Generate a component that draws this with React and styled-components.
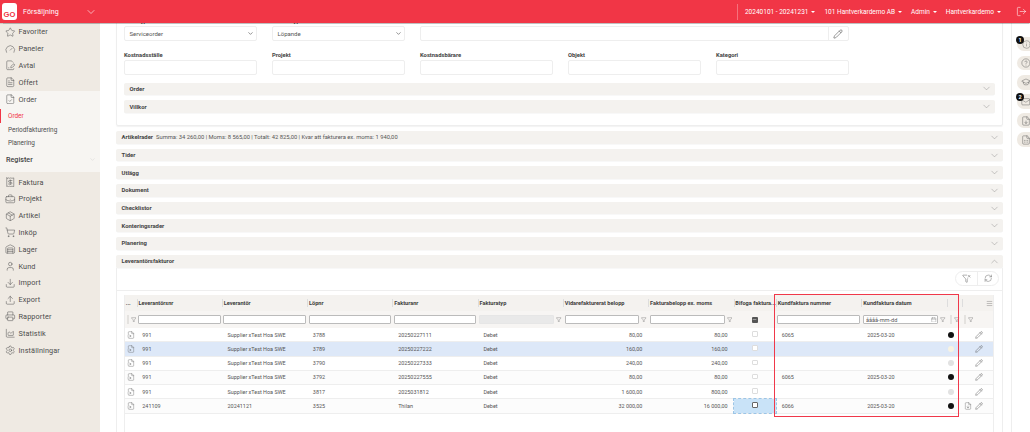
import React from "react";
import styled, { createGlobalStyle } from "styled-components";
import {
  Star, Gauge, FileSignature, FileText, FileCheck, Receipt, BriefcaseBusiness, Package, ShoppingCart,
  Warehouse, User, Download, Upload, Printer, AreaChart, Settings, ChevronDown, LogOut, Pencil, Info,
  HelpCircle, GraduationCap, Mail, FileDown, FileSpreadsheet, FilterX, RefreshCw, Filter, Calendar, Menu, FileInput, Minus
} from "lucide-react";

const Global = createGlobalStyle`
  html, body { margin: 0; padding: 0; background: #fff; }
  body { font-family: Roboto, "Liberation Sans", sans-serif; color: #555; overflow: hidden; }
  * { box-sizing: border-box; }
`;

const Page = styled.div`width: 1030px; height: 432px; overflow: hidden; display: flex; flex-direction: column;`;

const Topbar = styled.header`
  height: 23px; flex: none; background: #f13646; color: #fff; display: flex; align-items: center;
  position: relative; z-index: 2; box-shadow: 0 0.5px 1px rgba(0,0,0,.25);
`;
const Logo = styled.div`
  width: 15px; height: 17px; margin-left: 2px; background: #fff; border-radius: 3px; color: #f13646;
  font: 700 7.6px "Liberation Sans", sans-serif; display: flex; align-items: flex-end; justify-content: center; padding-bottom: 1px;
`;
const ModuleName = styled.span`font-size: 7.1px; margin-left: 6px; width: 61.5px; letter-spacing: .1px;`;
const TopSpacer = styled.div`flex: 1;`;
const TopDivider = styled.div`width: 1px; height: 16px; background: rgba(255,255,255,.3); margin-right: 7px;`;
const TopMenu = styled.div`display: flex; align-items: center; font-size: 6.5px; margin-right: ${p => p.$gap}px;`;
const Caret = styled.i`
  display: inline-block; margin-left: 3px; border-left: 2.2px solid transparent; border-right: 2.2px solid transparent; border-top: 2.2px solid #fff;
`;
const ExitWrap = styled.div`margin-right: 3px; display: flex;`;

const Body = styled.div`flex: 1; min-height: 0; display: flex;`;

const Sidebar = styled.nav`width: 100px; flex: none; background: #efeae3; display: flex; flex-direction: column; padding-top: .6px;`;
const NavItem = styled.div`
  height: 16.8px; display: flex; align-items: center; padding-left: 5px; gap: 3px; font-size: 7.3px; color: #4d4d4d; letter-spacing: .1px;
  svg { flex: none; color: #555; }
`;
const ActiveBlock = styled.div`background: #f7f5f2; height: 81.5px; margin-bottom: 1.5px; display: flex; flex-direction: column;`;
const SubItem = styled.div`
  height: 13.7px; display: flex; align-items: center; font-size: 6.4px;
  color: ${p => (p.$active ? "#f13646" : "#4d4d4d")};
  border-left: ${p => (p.$active ? "1px solid #f13646" : "none")};
  margin-top: ${p => (p.$active ? "1.5px" : "0")};
  padding-left: ${p => (p.$active ? "7px" : "8px")};
`;
const RegisterHead = styled.div`
  height: 19px; display: flex; align-items: center; justify-content: space-between; padding: 0 4px 0 6px; font-size: 7.2px; font-weight: 500; color: #444;
  svg { color: #bbb; }
`;

const Main = styled.main`flex: 1; min-width: 0; overflow: hidden; padding: 0 8px 0 16px; border-right: 1px solid #eee;`;
const Scrolled = styled.div`margin-top: -12px; display: flex; flex-direction: column;`;

const Card = styled.section`
  border: 1px solid #eee; border-radius: 2px; height: 114.5px; padding: 0 7px; margin-bottom: 5.5px; box-shadow: 0 .5px 1px rgba(0,0,0,.05);
`;
const FormGrid = styled.div`
  display: grid; grid-template-columns: repeat(5, 133px); column-gap: 15px; margin-bottom: 7.5px;
`;
const FieldBox = styled.div`
  grid-column: span ${p => p.$span || 1};
`;
const Label = styled.div`height: 11px; margin-top: ${p => p.$top || 0}px; font-size: 5.8px; font-weight: 700; color: #444; display: flex; align-items: center;`;
const Input = styled.div`
  height: 15px; border: 1px solid #eee; border-radius: 2px; background: #fff; display: flex; align-items: center; justify-content: space-between;
  padding: 0 2px 0 4.5px; font-size: 6px; color: #555;
`;
const PencilCell = styled.div`
  height: 100%; width: 20.5px; margin-right: -2px; border-left: 1px solid #eee; display: flex; align-items: center; justify-content: center; color: #444;
`;

const Accordion = styled.div`
  height: ${p => p.$h || 12.7}px; flex: none; background: #f4f2ef; border-radius: 2px; display: flex; align-items: center; justify-content: space-between;
  padding: 0 3.5px 0 5.5px; margin-bottom: ${p => (p.$mb === undefined ? 5 : p.$mb)}px; font-size: 5.9px; color: #555;
  box-shadow: 0 .5px 0 rgba(0,0,0,.06);
  svg { color: #888; }
  b { font-weight: 700; color: #444; }
`;
const AccordionText = styled.span`font-size: 5.8px; margin-left: 3px; color: #555;`;
const AccordionLabel = styled.div`display: flex; align-items: center;`;

const OpenPanel = styled.section`display: flex; flex-direction: column;`;
const PanelBody = styled.div`border: 1px solid #eee; border-top: none; margin-top: -5px; padding-top: 0; height: 180px;`;
const Toolbar = styled.div`height: 23.5px; border-bottom: 1px solid #eee; display: flex; align-items: center; justify-content: flex-end; padding: 0 3px 1px 0;`;
const PillGroup = styled.div`width: 44px; height: 15px; border: 1px solid #eee; border-radius: 8px; display: flex; color: #555;`;
const PillBtn = styled.div`
  flex: 1; display: flex; align-items: center; justify-content: center;
  & + & { border-left: 1px solid #eee; }
`;

const cols = "11.6px repeat(7, 85.29px) 42.4px 85.5px 85.5px 15px 12px 21px";
const GridWrap = styled.div`position: relative; margin: 4px 8px 0 7px; border-left: 1px solid #eee; border-right: 1px solid #eee; height: 160px;`;
const HeaderRow = styled.div`display: grid; grid-template-columns: ${cols}; height: 16px; background: #f4f2ef; align-items: center;`;
const FilterRow = styled.div`display: grid; grid-template-columns: ${cols}; height: 17px; background: #f7f5f3; align-items: center;`;
const DataRow = styled.div`
  display: grid; grid-template-columns: ${cols}; height: 14.27px; align-items: center; border-bottom: 1px solid #eee;
  background: ${p => (p.$selected ? "#dde8f8" : p.$odd ? "#fcfcfc" : "#fff")}; font-size: 5.45px; color: #555;
`;
const HeadCell = styled.div`
  font-size: 5.6px; font-weight: 700; color: #3d3d3d; white-space: nowrap; overflow: hidden; height: 8px; line-height: 8px;
  border-left: ${p => (p.$noLine ? "none" : "1px solid #ddd")}; padding-left: .8px;
  display: flex; align-items: center; justify-content: ${p => (p.$end ? "flex-end" : "flex-start")};
  padding-right: ${p => (p.$end ? "2px" : "0")};
`;
const FilterCell = styled.div`display: flex; align-items: center; gap: 2px; padding: 0 ${p => p.$pr === undefined ? 1.3 : p.$pr}px 0 1.5px; height: 100%; color: #555; justify-content: ${p => (p.$center ? "center" : "flex-start")};`;
const FilterInput = styled.input`
  flex: 1; min-width: 0; width: 100%; height: 8.6px; border: .6px solid ${p => (p.$disabled ? "#e6e6e6" : "#bbb")}; border-radius: 1px; padding: 0 2px;
  background: ${p => (p.$disabled ? "#e9e9e9" : "#fff")}; font: 5.6px Roboto, sans-serif; outline: none;
  &::placeholder { color: #555; }
`;
const DateWrap = styled.div`position: relative; flex: 1; min-width: 0; display: flex;`;
const DateIcon = styled.span`position: absolute; right: 1.5px; top: 1.5px; display: flex; color: #555;`;
const TriState = styled.div`width: 6px; height: 6px; background: #555; border-radius: 1px; display: flex; align-items: center; justify-content: center; color: #fff;`;
const Grip = styled.span`width: 2px; height: 9px; background: #e4e2df; flex: none;`;
const Cell = styled.div`
  padding: 0 ${p => (p.$right ? 6 : 0)}px 0 ${p => (p.$right ? 0 : 5.7)}px; text-align: ${p => (p.$right ? "right" : "left")}; white-space: nowrap; overflow: hidden;
`;
const IconCell = styled.div`
  display: flex; align-items: center; justify-content: ${p => p.$justify || "center"}; height: 100%; color: #555;
  padding-left: ${p => p.$pl || 0}px;
  background: ${p => (p.$focus ? "#c9e3f8" : "transparent")};
  outline: ${p => (p.$focus ? "0.6px dashed #9cc5e6" : "none")}; outline-offset: -0.6px;
`;
const Check = styled.span`
  width: 5.6px; height: 5.6px; border-radius: 1px; background: #fff; border: .6px solid ${p => (p.$strong ? "#666" : "#ddd")}; display: block; margin-bottom: 1.5px;
`;
const Dot = styled.span`width: 6px; height: 6px; border-radius: 50%; background: ${p => p.$c}; display: block;`;
const Highlight = styled.div`
  position: absolute; left: 649.2px; top: -1.5px; width: 184.5px; height: 123.5px; border: 1.4px solid #f0384a; pointer-events: none;
`;

const Rail = styled.aside`width: 18px; flex: none; padding: 14px 0 0 4.5px; display: flex; flex-direction: column; gap: 4.7px;`;
const RailBtn = styled.div`
  height: 14.4px; background: #efeae3; border-radius: 7px 0 0 7px; display: flex; align-items: center; justify-content: flex-start; padding-left: 2px; color: #555; position: relative;
`;
const RailIcon = styled.span`display: flex; margin-left: ${p => p.$ml || 0}px;`;
const Badge = styled.span`
  position: absolute; left: -.5px; top: -1px; width: 8px; height: 8px; border-radius: 50%; background: #111; color: #fff; font-size: 5.5px; font-weight: 700;
  display: flex; align-items: center; justify-content: center;
`;

const icon = { size: 10.5, strokeWidth: 1.2 };
const navTop = [["Favoriter", Star], ["Paneler", Gauge], ["Avtal", FileSignature], ["Offert", FileText]];
const navBottom = [["Faktura", Receipt], ["Projekt", BriefcaseBusiness], ["Artikel", Package], ["Inköp", ShoppingCart], ["Lager", Warehouse], ["Kund", User], ["Import", Download], ["Export", Upload], ["Rapporter", Printer], ["Statistik", AreaChart], ["Inställningar", Settings]];
const closedPanels = ["Tider", "Utlägg", "Dokument", "Checklistor", "Konteringsrader", "Planering"];
const headers = ["Leverantörsnr", "Leverantör", "Löpnr", "Fakturanr", "Fakturatyp", "Vidarefakturerat belopp", "Fakturabelopp ex. moms", "Bifoga faktura...", "Kundfaktura nummer", "Kundfaktura datum"];
const rows = [
  ["991", "Supplier xTest Hoa SWE", "3788", "20250227111", "80,00", "80,00", "6065", "2025-03-20", "#111"],
  ["991", "Supplier xTest Hoa SWE", "3789", "20250227222", "160,00", "160,00", "", "", "#f8f3e2"],
  ["991", "Supplier xTest Hoa SWE", "3790", "20250227333", "240,00", "240,00", "", "", "#e2e2e2"],
  ["991", "Supplier xTest Hoa SWE", "3792", "20250227555", "80,00", "80,00", "6065", "2025-03-20", "#111"],
  ["991", "Supplier xTest Hoa SWE", "3817", "2025031812", "1 600,00", "800,00", "", "", "#e2e2e2"],
  ["241109", "20241121", "3525", "Thilan", "32 000,00", "16 000,00", "6066", "2025-03-20", "#111"],
];
const Funnel = () => <Filter size={5.5} strokeWidth={1.4} style={{ flex: "none" }} />;
const Chev = ({ up }) => <ChevronDown size={11} strokeWidth={1} style={up ? { transform: "rotate(180deg)" } : undefined} />;

export default function App() {
  return (
    <Page>
      <Global />
      <Topbar>
        <Logo>GO</Logo>
        <ModuleName>Försäljning</ModuleName>
        <ChevronDown size={12} strokeWidth={1.2} />
        <TopSpacer />
        <TopDivider />
        <TopMenu $gap={9}>20240101 - 20241231<Caret /></TopMenu>
        <TopMenu $gap={9}>101 Hantverkardemo AB<Caret /></TopMenu>
        <TopMenu $gap={9}>Admin<Caret /></TopMenu>
        <TopMenu $gap={15}>Hantverkardemo<Caret /></TopMenu>
        <ExitWrap><LogOut size={11} strokeWidth={1.2} /></ExitWrap>
      </Topbar>
      <Body>
        <Sidebar>
          {navTop.map(([t, I]) => <NavItem key={t}><I {...icon} />{t}</NavItem>)}
          <ActiveBlock>
            <NavItem><FileCheck {...icon} />Order</NavItem>
            <SubItem $active>Order</SubItem>
            <SubItem>Periodfakturering</SubItem>
            <SubItem>Planering</SubItem>
            <RegisterHead>Register<ChevronDown size={7} strokeWidth={1} /></RegisterHead>
          </ActiveBlock>
          {navBottom.map(([t, I]) => <NavItem key={t}><I {...icon} />{t}</NavItem>)}
        </Sidebar>
        <Main>
          <Scrolled>
            <Card>
              <FormGrid>
                <FieldBox><Label $top={3}>Ordertyp</Label><Input>Serviceorder<ChevronDown size={7} strokeWidth={1.8} color="#333" /></Input></FieldBox>
                <FieldBox><Label $top={3}>Fakturatyp</Label><Input>Löpande<ChevronDown size={7} strokeWidth={1.8} color="#333" /></Input></FieldBox>
                <FieldBox $span={3}><Label $top={3}>Kund</Label><Input><span /><PencilCell><Pencil size={10} strokeWidth={1.3} /></PencilCell></Input></FieldBox>
                {["Kostnadsställe", "Projekt", "Kostnadsbärare", "Objekt", "Kategori"].map(l => (
                  <FieldBox key={l}><Label $top={8}>{l}</Label><Input /></FieldBox>
                ))}
              </FormGrid>
              <Accordion><b>Order</b><Chev /></Accordion>
              <Accordion $mb={0}><b>Villkor</b><Chev /></Accordion>
            </Card>
            <Accordion>
              <AccordionLabel><b>Artikelrader</b><AccordionText>Summa: 34 260,00 | Moms: 8 565,00 | Totalt: 42 825,00 | Kvar att fakturera ex. moms: 1 940,00</AccordionText></AccordionLabel>
              <Chev />
            </Accordion>
            {closedPanels.map(p => <Accordion key={p}><b>{p}</b><Chev /></Accordion>)}
            <OpenPanel>
              <Accordion><b>Leverantörsfakturor</b><Chev up /></Accordion>
              <PanelBody>
                <Toolbar>
                  <PillGroup>
                    <PillBtn><FilterX size={9} strokeWidth={1.2} /></PillBtn>
                    <PillBtn><RefreshCw size={8.5} strokeWidth={1.2} /></PillBtn>
                  </PillGroup>
                </Toolbar>
                <GridWrap>
                  <HeaderRow>
                    <HeadCell $noLine>...</HeadCell>
                    {headers.map(h => <HeadCell key={h}>{h}</HeadCell>)}
                    <HeadCell />
                    <HeadCell />
                    <HeadCell $noLine $end><Menu size={7} strokeWidth={1} /></HeadCell>
                  </HeaderRow>
                  <FilterRow>
                    <FilterCell $pr={0}><Grip /><Funnel /></FilterCell>
                    {[0, 1, 2, 3].map(i => <FilterCell key={i}><FilterInput readOnly aria-label={headers[i]} /></FilterCell>)}
                    {[4, 5, 6].map(i => (
                      <FilterCell key={i}><FilterInput readOnly aria-label={headers[i]} $disabled={i === 4} /><Funnel /></FilterCell>
                    ))}
                    <FilterCell $center><TriState><Minus size={5} strokeWidth={2} /></TriState></FilterCell>
                    <FilterCell><FilterInput readOnly aria-label={headers[8]} /></FilterCell>
                    <FilterCell>
                      <DateWrap>
                        <FilterInput readOnly placeholder="åååå-mm-dd" aria-label={headers[9]} />
                        <DateIcon><Calendar size={5.5} strokeWidth={1.2} /></DateIcon>
                      </DateWrap>
                      <Funnel />
                    </FilterCell>
                    <FilterCell $center $pr={0}><Grip /><Funnel /></FilterCell>
                    <FilterCell $center $pr={0}><Grip /><Funnel /></FilterCell>
                    <FilterCell />
                  </FilterRow>
                  {rows.map((r, i) => (
                    <DataRow key={i} $selected={i === 1} $odd={i === 3 || i === 5}>
                      <IconCell><FileInput size={8} strokeWidth={1.1} /></IconCell>
                      <Cell>{r[0]}</Cell>
                      <Cell>{r[1]}</Cell>
                      <Cell>{r[2]}</Cell>
                      <Cell>{r[3]}</Cell>
                      <Cell>Debet</Cell>
                      <Cell $right>{r[4]}</Cell>
                      <Cell $right>{r[5]}</Cell>
                      <IconCell $focus={i === 5}><Check $strong={i === 5} /></IconCell>
                      <Cell>{r[6]}</Cell>
                      <Cell>{r[7]}</Cell>
                      <IconCell $justify="flex-start" $pl={1}><Dot $c={r[8]} /></IconCell>
                      <IconCell>{i === 5 && <FileDown size={8} strokeWidth={1.1} />}</IconCell>
                      <IconCell $justify="flex-start" $pl={1}><Pencil size={8} strokeWidth={1.4} /></IconCell>
                    </DataRow>
                  ))}
                  <Highlight />
                </GridWrap>
              </PanelBody>
            </OpenPanel>
          </Scrolled>
        </Main>
        <Rail>
          <RailBtn><Badge>1</Badge><RailIcon $ml={3}><Info size={9} strokeWidth={1.1} /></RailIcon></RailBtn>
          <RailBtn><RailIcon $ml={2}><HelpCircle size={10} strokeWidth={1.1} /></RailIcon></RailBtn>
          <RailBtn><RailIcon $ml={2}><GraduationCap size={10} strokeWidth={1.1} /></RailIcon></RailBtn>
          <RailBtn><Badge>2</Badge><RailIcon $ml={2}><Mail size={9.5} strokeWidth={1.1} /></RailIcon></RailBtn>
          <RailBtn><RailIcon $ml={2}><FileDown size={10} strokeWidth={1.1} /></RailIcon></RailBtn>
          <RailBtn><RailIcon $ml={2}><FileSpreadsheet size={10} strokeWidth={1.1} /></RailIcon></RailBtn>
        </Rail>
      </Body>
    </Page>
  );
}
